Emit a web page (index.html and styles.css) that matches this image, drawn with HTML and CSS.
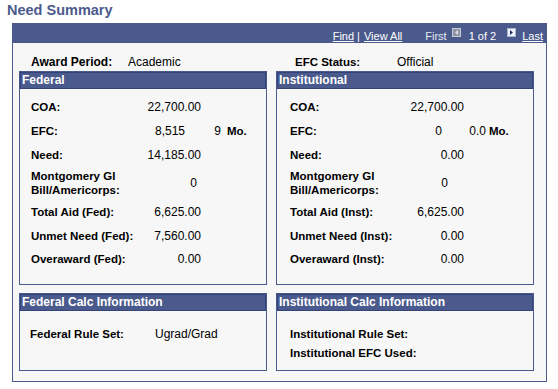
FILE: index.html
```html
<!doctype html>
<html lang="en">
  <head>
    <meta charset="UTF-8" />
    <meta name="viewport" content="width=device-width, initial-scale=1.0" />
    <title>Need Summary</title>
    <link rel="stylesheet" href="styles.css">
  </head>
  <body>
    <h1 class="page-title">Need Summary</h1>

    <div class="summary-box">
      <div class="summary-nav">
        <a href="#">Find</a><span class="sep">|</span><a href="#">View All</a>
        <span class="nav-first">First</span>
        <svg class="nav-btn" width="9" height="9" viewBox="0 0 9 9">
          <rect x="0.5" y="0.5" width="8" height="8" fill="#8e94a6" stroke="#c9ccd6" />
          <path d="M6 2 L3 4.5 L6 7 Z" fill="#dde0e8" />
        </svg>
        <span class="nav-count">1 of 2</span>
        <svg class="nav-btn" width="9" height="9" viewBox="0 0 9 9">
          <rect x="0.5" y="0.5" width="8" height="8" fill="#f2f5fb" stroke="#a9b3cf" />
          <path d="M3 2 L6 4.5 L3 7 Z" fill="#1e2e6c" />
        </svg>
        <a href="#" class="nav-last">Last</a>
      </div>

      <div class="summary-body">
        <div class="meta meta-fed">
          <span class="meta-label">Award Period:</span>
          <span>Academic</span>
        </div>
        <div class="meta meta-inst">
          <span class="meta-label">EFC Status:</span>
          <span>Official</span>
        </div>

        <!-- federal need -->
        <div class="panel panel-fed">
          <div class="panel-head">Federal</div>
          <div class="panel-body">
            <div class="row"><span class="lbl">COA:</span><span class="val">22,700.00</span></div>
            <div class="row">
              <span class="lbl">EFC:</span><span class="val val-efc">8,515</span>
              <span class="extra">9</span><span class="unit">Mo.</span>
            </div>
            <div class="row"><span class="lbl">Need:</span><span class="val">14,185.00</span></div>
            <div class="row row-tall">
              <span class="lbl">Montgomery GI<br>Bill/Americorps:</span><span class="val val-gi">0</span>
            </div>
            <div class="row row-total"><span class="lbl">Total Aid (Fed):</span><span class="val">6,625.00</span></div>
            <div class="row row-short"><span class="lbl">Unmet Need (Fed):</span><span class="val">7,560.00</span></div>
            <div class="row"><span class="lbl">Overaward (Fed):</span><span class="val">0.00</span></div>
          </div>
        </div>

        <!-- institutional need -->
        <div class="panel panel-inst">
          <div class="panel-head">Institutional</div>
          <div class="panel-body">
            <div class="row"><span class="lbl">COA:</span><span class="val">22,700.00</span></div>
            <div class="row">
              <span class="lbl">EFC:</span><span class="val val-efc">0</span>
              <span class="extra">0.0</span><span class="unit">Mo.</span>
            </div>
            <div class="row"><span class="lbl">Need:</span><span class="val">0.00</span></div>
            <div class="row row-tall">
              <span class="lbl">Montgomery GI<br>Bill/Americorps:</span><span class="val val-gi">0</span>
            </div>
            <div class="row row-total"><span class="lbl">Total Aid (Inst):</span><span class="val">6,625.00</span></div>
            <div class="row row-short"><span class="lbl">Unmet Need (Inst):</span><span class="val">0.00</span></div>
            <div class="row"><span class="lbl">Overaward (Inst):</span><span class="val">0.00</span></div>
          </div>
        </div>

        <div class="panel calc calc-fed">
          <div class="panel-head">Federal Calc Information</div>
          <div class="panel-body">
            <div class="calc-row"><span class="calc-label">Federal Rule Set:</span><span>Ugrad/Grad</span></div>
          </div>
        </div>

        <div class="panel calc calc-inst">
          <div class="panel-head">Institutional Calc Information</div>
          <div class="panel-body">
            <div class="calc-row"><span class="calc-label">Institutional Rule Set:</span></div>
            <div class="calc-row"><span class="calc-label">Institutional EFC Used:</span></div>
          </div>
        </div>
      </div>
    </div>
  </body>
</html>
```

FILE: styles.css
```css
body {
  margin: 0;
  padding: 0;
  font-family: 'Liberation Sans', Arial, sans-serif;
  background: #fff;
  color: #000;
}

.page-title {
  margin: 1px 0 4px 7px;
  font-size: 14.5px;
  line-height: 18px;
  font-weight: bold;
  color: #4b5a8c;
}

.summary-box {
  box-sizing: border-box;
  width: 535px;
  margin-left: 12px;
  border: 1px solid #4b5a8c;
  background: #f7f7f7;
}

.summary-nav {
  display: flex;
  align-items: flex-end;
  justify-content: flex-end;
  height: 19px;
  padding-right: 3px;
  background: #4b5a8c;
  color: #fff;
  font-size: 11px;
  line-height: 13px;
}

.summary-nav a {
  color: #fff;
}

.sep {
  margin: 0 4px 0 3px;
}

.nav-first {
  margin-left: 23px;
  color: #e6e9f2;
}

.nav-btn {
  display: block;
  margin: 0 0 6px 5px;
}

.nav-count {
  margin: 0 6px 0 8px;
}

.nav-last {
  margin-left: 6px;
}

.summary-body {
  display: grid;
  grid-template-columns: 248px 258px;
  column-gap: 9px;
  padding: 0 12px 10px 6px;
}

.meta {
  display: flex;
  padding-top: 12px;
  margin-bottom: 2px;
  font-size: 12px;
  line-height: 14px;
}

.meta-label {
  font-weight: bold;
}

.meta-fed {
  padding-left: 12px;
}

.meta-fed .meta-label {
  width: 97px;
}

.meta-inst {
  padding-left: 19px;
}

.meta-inst .meta-label {
  width: 102px;
  font-size: 11.5px;
}

.panel {
  border: 1px solid #4b5a8c;
  background: #f7f7f7;
}

.panel-head {
  height: 17px;
  padding-left: 2px;
  background: #4b5a8c;
  box-shadow: inset 0 0 0 1px #34447a;
  color: #fff;
  font-size: 12px;
  font-weight: bold;
  line-height: 17px;
  white-space: nowrap;
}

.panel-body {
  padding: 6px 0 13px;
}

.row {
  display: flex;
  align-items: center;
  height: 24px;
  font-size: 12px;
  white-space: nowrap;
}

.row-tall {
  height: 32px;
}

.row-total {
  height: 26px;
}

.row-short {
  height: 22px;
}

.lbl {
  flex-shrink: 0;
  font-size: 11.5px;
  font-weight: bold;
  line-height: 14px;
}

.val {
  text-align: right;
}

.extra {
  text-align: right;
}

.unit {
  font-size: 11.5px;
  font-weight: bold;
}

.panel-fed .panel-body {
  padding-left: 11px;
}

.panel-fed .lbl {
  width: 100px;
}

.panel-fed .val {
  width: 70px;
}

.panel-fed .val-efc {
  box-sizing: border-box;
  padding-right: 16px;
}

.panel-fed .val-gi {
  box-sizing: border-box;
  padding-right: 4px;
}

.panel-fed .extra {
  width: 20px;
}

.panel-fed .unit {
  margin-left: 6px;
}

.panel-inst .panel-body {
  padding-left: 13px;
}

.panel-inst .lbl {
  width: 110px;
}

.panel-inst .val {
  width: 64px;
}

.panel-inst .val-efc {
  box-sizing: border-box;
  padding-right: 22px;
}

.panel-inst .val-gi {
  box-sizing: border-box;
  padding-right: 16px;
}

.panel-inst .extra {
  width: 22px;
}

.panel-inst .unit {
  margin-left: 3px;
}

.calc {
  margin-top: 8px;
}

.calc .panel-body {
  padding: 13px 0 8px;
}

.calc-row {
  display: flex;
  align-items: center;
  height: 19px;
  font-size: 12px;
  white-space: nowrap;
}

.calc-label {
  font-size: 11.5px;
  font-weight: bold;
}

.calc-fed .panel-body {
  padding-left: 10px;
}

.calc-fed .calc-label {
  width: 125px;
}

.calc-inst .panel-body {
  padding-left: 13px;
}
```
